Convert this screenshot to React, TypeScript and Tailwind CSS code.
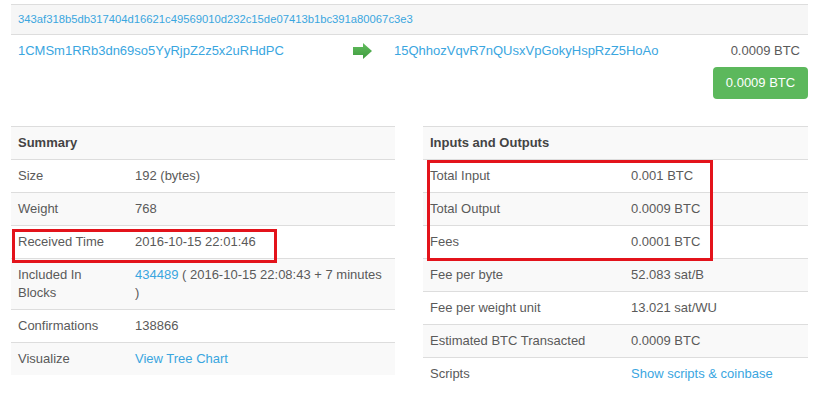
import React from "react";

const summaryRows: { label: string; value: React.ReactNode }[] = [
  { label: "Size", value: "192 (bytes)" },
  { label: "Weight", value: "768" },
  { label: "Received Time", value: "2016-10-15 22:01:46" },
  {
    label: "Included In Blocks",
    value: (
      <>
        <span className="text-[#3aa6df]">434489</span> ( 2016-10-15 22:08:43 + 7 minutes )
      </>
    ),
  },
  { label: "Confirmations", value: "138866" },
  { label: "Visualize", value: <span className="text-[#3aa6df]">View Tree Chart</span> },
];

const ioRows: { label: string; value: React.ReactNode }[] = [
  { label: "Total Input", value: "0.001 BTC" },
  { label: "Total Output", value: "0.0009 BTC" },
  { label: "Fees", value: "0.0001 BTC" },
  { label: "Fee per byte", value: "52.083 sat/B" },
  { label: "Fee per weight unit", value: "13.021 sat/WU" },
  { label: "Estimated BTC Transacted", value: "0.0009 BTC" },
  { label: "Scripts", value: <span className="text-[#3aa6df]">Show scripts &amp; coinbase</span> },
];

function InfoTable({
  title,
  rows,
  labelWidth,
}: {
  title: string;
  rows: { label: string; value: React.ReactNode }[];
  labelWidth: string;
}) {
  return (
    <div className="flex flex-col">
      <div className="border-t border-[#dddddd] bg-[#f9f9f9] px-[7px] py-[7px] font-bold leading-[18px] text-[#444]">
        {title}
      </div>
      {rows.map((row, i) => (
        <div
          key={row.label}
          className={`flex border-t border-[#dddddd] leading-[18px] ${
            i % 2 === 1 ? "bg-[#f9f9f9]" : "bg-white"
          }`}
        >
          <div className={`${labelWidth} shrink-0 px-[7px] py-[7px]`}>{row.label}</div>
          <div className="flex-1 px-[8px] py-[7px]">{row.value}</div>
        </div>
      ))}
    </div>
  );
}

export default function App() {
  return (
    <div
      className="relative h-[398px] w-[820px] overflow-hidden bg-white pt-[4px] text-[13px] text-[#5a5a5a]"
      style={{ fontFamily: '"Liberation Sans", Arial, sans-serif' }}
    >
      {/* Transaction header */}
      <div className="ml-[11px] w-[797px]">
        <div className="border-t border-[#dddddd] bg-[#f6f6f6] px-[7px] py-[6px] text-[11.25px] leading-[17px] text-[#3aa6df]">
          343af318b5db317404d16621c49569010d232c15de07413b1bc391a80067c3e3
        </div>
        <div className="flex border-t border-[#dddddd] pb-[8px] pt-[7px] leading-[18px]">
          <div className="w-[342px] shrink-0 pl-[7px] text-[#3aa6df]">1CMSm1RRb3dn69so5YyRjpZ2z5x2uRHdPC</div>
          <div className="flex h-[18px] w-[41px] shrink-0 items-center">
            <svg width="19" height="16" viewBox="0 0 19 16">
              <defs>
                <linearGradient id="arr" x1="0" y1="0" x2="0" y2="1">
                  <stop offset="0" stopColor="#62bd5e" />
                  <stop offset="1" stopColor="#3f9b3f" />
                </linearGradient>
              </defs>
              <polygon points="0,4 10,4 10,0 19,8 10,16 10,12 0,12" fill="url(#arr)" />
            </svg>
          </div>
          <div className="flex-1 text-[#3aa6df]">15QhhozVqvR7nQUsxVpGokyHspRzZ5HoAo</div>
          <div className="flex flex-col items-end">
            <div className="pr-[8px]">0.0009 BTC</div>
            <div className="mt-[7px] flex h-[32px] w-[95px] items-center justify-center rounded-[4px] bg-[#5cb85c] text-white">
              0.0009 BTC
            </div>
          </div>
        </div>
      </div>

      {/* Detail tables */}
      <div className="ml-[11px] mt-[19px] flex w-[797px] gap-[28px]">
        <div className="w-[384px]">
          <InfoTable title="Summary" rows={summaryRows} labelWidth="w-[116px]" />
        </div>
        <div className="w-[385px]">
          <InfoTable title="Inputs and Outputs" rows={ioRows} labelWidth="w-[200px]" />
        </div>
      </div>

      {/* Annotation boxes */}
      <div className="pointer-events-none absolute left-[12px] top-[229px] h-[34px] w-[265px] border-[3px] border-[#e3131b]" />
      <div className="pointer-events-none absolute left-[427px] top-[160px] h-[101px] w-[286px] border-[3px] border-[#e3131b]" />
    </div>
  );
}
